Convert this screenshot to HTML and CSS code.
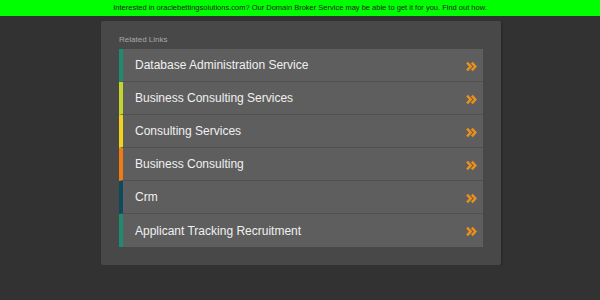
FILE: index.html
```html
<!DOCTYPE html>
<html lang="en">
<head>
  <meta charset="UTF-8" />
  <title>oraclebettingsolutions.com</title>
  <link rel="stylesheet" href="styles.css">
</head>
<body>
  <div class="broker-bar">
    Interested in oraclebettingsolutions.com? Our Domain Broker Service may be able to get it for you. Find out how.
  </div>

  <div class="panel">
    <div class="panel-label">Related Links</div>
    <ul class="links">
      <li class="link c-teal"><span>Database Administration Service</span><svg class="chev" viewBox="0 0 10 10"><path d="M1 1.5 L4.2 5 L1 8.5 M5.3 1.5 L8.5 5 L5.3 8.5" /></svg></li>
      <li class="link c-lime"><span>Business Consulting Services</span><svg class="chev" viewBox="0 0 10 10"><path d="M1 1.5 L4.2 5 L1 8.5 M5.3 1.5 L8.5 5 L5.3 8.5" /></svg></li>
      <li class="link c-yellow"><span>Consulting Services</span><svg class="chev" viewBox="0 0 10 10"><path d="M1 1.5 L4.2 5 L1 8.5 M5.3 1.5 L8.5 5 L5.3 8.5" /></svg></li>
      <li class="link c-orange"><span>Business Consulting</span><svg class="chev" viewBox="0 0 10 10"><path d="M1 1.5 L4.2 5 L1 8.5 M5.3 1.5 L8.5 5 L5.3 8.5" /></svg></li>
      <li class="link c-navy"><span>Crm</span><svg class="chev" viewBox="0 0 10 10"><path d="M1 1.5 L4.2 5 L1 8.5 M5.3 1.5 L8.5 5 L5.3 8.5" /></svg></li>
      <li class="link c-teal"><span>Applicant Tracking Recruitment</span><svg class="chev" viewBox="0 0 10 10"><path d="M1 1.5 L4.2 5 L1 8.5 M5.3 1.5 L8.5 5 L5.3 8.5" /></svg></li>
    </ul>
  </div>
</body>
</html>
```

FILE: styles.css
```css
/* Page */
html, body {
  margin: 0;
  background: #323232;
  font-family: 'Liberation Sans', Arial, sans-serif;
}

.broker-bar {
  height: 16px;
  line-height: 16px;
  background: #00ff00;
  color: #1a1a1a;
  font-size: 7.5px;
  text-align: center;
}

/* Links panel */
.panel {
  width: 364px;
  margin: 5px 99px 0 101px;
  padding: 14px 18px 18px;
  background: #484848;
  border-radius: 2px;
  box-shadow: 1px 1px 2px rgba(0, 0, 0, 0.25);
}
.panel-label {
  font-size: 8px;
  line-height: 10px;
  color: #a8a8a8;
  margin-bottom: 4px;
}

.links {
  list-style: none;
  margin: 0;
  padding: 0;
}
.link {
  display: flex;
  align-items: center;
  justify-content: space-between;
  height: 32px;
  padding: 0 6px 0 12px;
  background: #5e5e5e;
  border-left: 4px solid;
  border-bottom: 1px solid #505050;
  color: #f0f0f0;
  font-size: 12px;
}
.link:last-child { border-bottom: none; height: 33px; }

.chev {
  width: 11px;
  height: 11px;
  margin-top: 2px;
  fill: none;
  stroke: #e8901a;
  stroke-width: 2.3;
}

.c-teal { border-left-color: #1e8a72; }
.c-lime { border-left-color: #c3d52c; }
.c-yellow { border-left-color: #f2d31b; }
.c-orange { border-left-color: #f07b12; }
.c-navy { border-left-color: #0d4a5e; }
```
